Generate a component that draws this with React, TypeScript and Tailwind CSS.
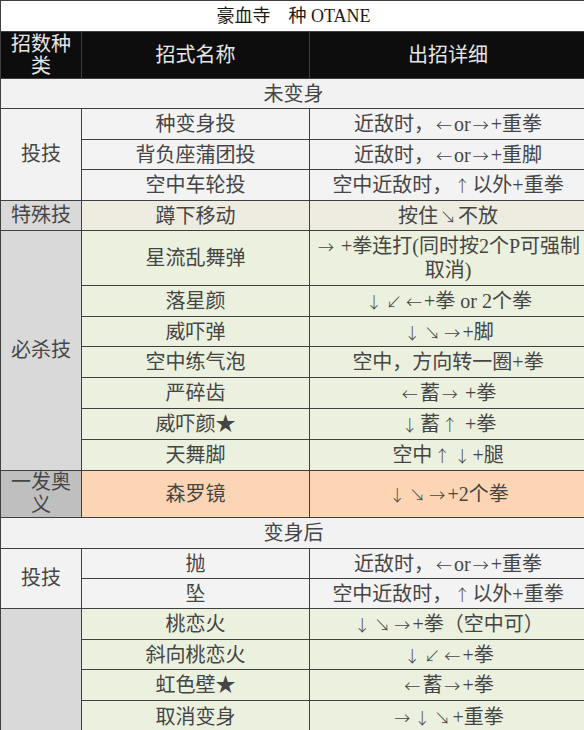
import type { ReactNode } from 'react';

type Move = { name: string; detail: string; h: string };
type Group =
  | { kind: 'section'; title: string; h: string }
  | { kind: 'moves'; label: ReactNode; labelBg: string; cellBg: string; moves: Move[] };

const LINE = 'border border-[#3f3f3f]';
const ARROWS = /([←→↑↓↘↙])/;

// arrows in the sheet are full-width cells with a thin glyph
function Detail({ text }: { text: string }) {
  const lines = text.split('\n');
  return (
    <>
      {lines.map((line, li) => (
        <span key={li} className="block">
          {line.split(ARROWS).map((part, pi) =>
            ARROWS.test(part) ? (
              <span
                key={pi}
                className="inline-block w-[20px] text-center font-['Noto_Sans_CJK_SC',sans-serif] text-[16px] font-light"
              >
                {part}
              </span>
            ) : (
              <span key={pi}>{part}</span>
            ),
          )}
        </span>
      ))}
    </>
  );
}

const groups: Group[] = [
  { kind: 'section', title: '未变身', h: 'h-[30px]' },
  {
    kind: 'moves',
    label: '投技',
    labelBg: 'bg-[#f2f2f2]',
    cellBg: 'bg-[#f3f3f3]',
    moves: [
      { name: '种变身投', detail: '近敌时，←or→+重拳', h: 'h-[31px]' },
      { name: '背负座蒲团投', detail: '近敌时，←or→+重脚', h: 'h-[30px]' },
      { name: '空中车轮投', detail: '空中近敌时，↑以外+重拳', h: 'h-[31px]' },
    ],
  },
  {
    kind: 'moves',
    label: '特殊技',
    labelBg: 'bg-[#d9d9d9]',
    cellBg: 'bg-[#eeece1]',
    moves: [{ name: '蹲下移动', detail: '按住↘不放', h: 'h-[30px]' }],
  },
  {
    kind: 'moves',
    label: '必杀技',
    labelBg: 'bg-[#d9d9d9]',
    cellBg: 'bg-[#ebf1de]',
    moves: [
      { name: '星流乱舞弹', detail: '→ +拳连打(同时按2个P可强制\n取消)', h: 'h-[55px]' },
      { name: '落星颜', detail: '↓↙←+拳 or 2个拳', h: 'h-[31px]' },
      { name: '威吓弹', detail: '↓↘→+脚', h: 'h-[30px]' },
      { name: '空中练气泡', detail: '空中，方向转一圈+拳', h: 'h-[31px]' },
      { name: '严碎齿', detail: '←蓄→ +拳', h: 'h-[31px]' },
      { name: '威吓颜★', detail: '↓蓄↑ +拳', h: 'h-[31px]' },
      { name: '天舞脚', detail: '空中↑↓+腿', h: 'h-[31px]' },
    ],
  },
  {
    kind: 'moves',
    label: (
      <>
        一发奥
        <br />
        义
      </>
    ),
    labelBg: 'bg-[#bfbfbf]',
    cellBg: 'bg-[#fcd5b4]',
    moves: [{ name: '森罗镜', detail: '↓↘→+2个拳', h: 'h-[47px]' }],
  },
  { kind: 'section', title: '变身后', h: 'h-[31px]' },
  {
    kind: 'moves',
    label: '投技',
    labelBg: 'bg-[#f2f2f2]',
    cellBg: 'bg-[#f3f3f3]',
    moves: [
      { name: '抛', detail: '近敌时，←or→+重拳', h: 'h-[30px]' },
      { name: '坠', detail: '空中近敌时，↑以外+重拳', h: 'h-[30px]' },
    ],
  },
  {
    kind: 'moves',
    label: '',
    labelBg: 'bg-[#d9d9d9]',
    cellBg: 'bg-[#ebf1de]',
    moves: [
      { name: '桃恋火', detail: '↓↘→+拳（空中可）', h: 'h-[31px]' },
      { name: '斜向桃恋火', detail: '↓↙←+拳', h: 'h-[30px]' },
      { name: '虹色壁★', detail: '←蓄→+拳', h: 'h-[31px]' },
      { name: '取消变身', detail: '→↓↘+重拳', h: 'h-[32px]' },
    ],
  },
];

export default function App() {
  return (
    <div className="w-[584px] h-[730px] overflow-hidden bg-white font-['Liberation_Serif','Noto_Sans_CJK_SC',serif] text-[20px] leading-[24px] text-[#454545]">
      <table className="w-[586px] table-fixed border-collapse text-center">
        <colgroup>
          <col className="w-[81px]" />
          <col className="w-[228px]" />
          <col className="w-[277px]" />
        </colgroup>
        <tbody>
          <tr className="h-[31px]">
            <td colSpan={3} className={`${LINE} bg-white text-[18px] text-[#1a1a1a]`}>
              豪血寺　种 OTANE
            </td>
          </tr>
          <tr className="h-[47px] bg-[#0d0d0d] text-[#e6e6e6]">
            <td className="border border-[#3f3f3f] px-0 leading-[22px]">
              招数种
              <br />类
            </td>
            <td className="border border-[#3f3f3f]">招式名称</td>
            <td className="border border-[#3f3f3f]">出招详细</td>
          </tr>
          {groups.map((g, gi) =>
            g.kind === 'section' ? (
              <tr key={gi} className={g.h}>
                <td colSpan={3} className={`${LINE} bg-[#f2f2f2]`}>
                  {g.title}
                </td>
              </tr>
            ) : (
              g.moves.map((m, mi) => (
                <tr key={`${gi}-${mi}`} className={m.h}>
                  {mi === 0 && (
                    <td
                      rowSpan={g.moves.length}
                      className={`${LINE} ${g.labelBg} px-0 leading-[23px]`}
                    >
                      {g.label}
                    </td>
                  )}
                  <td className={`${LINE} ${g.cellBg}`}>{m.name}</td>
                  <td className={`${LINE} ${g.cellBg} px-0`}>
                    <Detail text={m.detail} />
                  </td>
                </tr>
              ))
            ),
          )}
        </tbody>
      </table>
    </div>
  );
}
